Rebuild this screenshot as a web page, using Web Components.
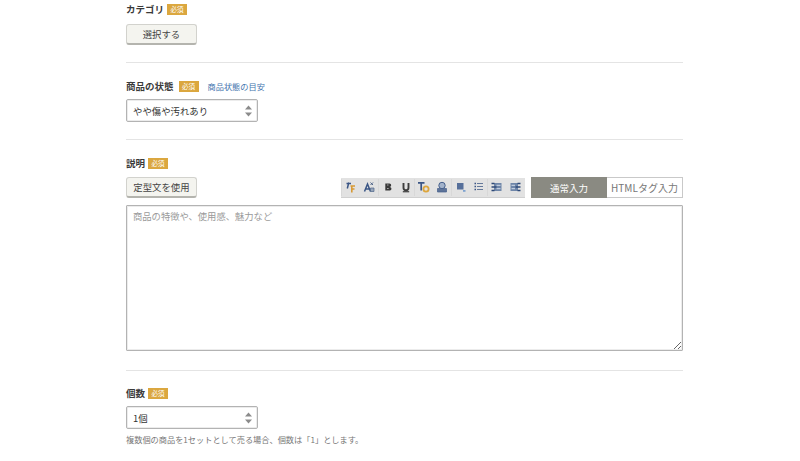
<!DOCTYPE html>
<html lang="ja">
<head>
<meta charset="utf-8">
<title>商品情報</title>
<style>
  html, body { margin: 0; background: #fff; height: 461px; overflow: hidden; }
  body { font-family: "Noto Sans CJK JP", "Liberation Sans", sans-serif; color: #333; }
</style>
</head>
<body>
<item-form>
  <form-field label="カテゴリ" gap="6" badge-gap="3">
    <plain-button width="71">選択する</plain-button>
  </form-field>
  <form-divider top="17" bottom="14"></form-divider>
  <form-field label="商品の状態" gap="4" badge-gap="5">
    <a slot="extra" style="color:#3f74ae;font-size:8.2px;margin-left:9px;text-decoration:none">商品状態の目安</a>
    <select-box>やや傷や汚れあり</select-box>
  </form-field>
  <form-divider top="17" bottom="14"></form-divider>
  <form-field label="説明" gap="5" badge-gap="3">
    <editor-box></editor-box>
  </form-field>
  <form-divider top="19" bottom="13"></form-divider>
  <form-field label="個数" gap="4" badge-gap="3">
    <select-box>1個</select-box>
    <p style="margin:4px 0 0;font-size:8.2px;line-height:12px;color:#777">複数個の商品を1セットとして売る場合、個数は「1」とします。</p>
  </form-field>
</item-form>

<script>
class ItemForm extends HTMLElement {
  constructor() {
    super();
    this.attachShadow({ mode: "open" });
    this.shadowRoot.innerHTML = `
      <style>
        :host { display: block; width: 557px; margin: 0 auto 0 126px; }
      </style>
      <slot></slot>
    `;
  }
}

class FormField extends HTMLElement {
  constructor() {
    super();
    this.attachShadow({ mode: "open" });
    const label = this.getAttribute("label");
    const gap = this.getAttribute("gap") || 4;
    const badgeGap = this.getAttribute("badge-gap") || 3;
    this.shadowRoot.innerHTML = `
      <style>
        :host { display: block; }
        #head {
          display: flex;
          align-items: center;
          height: 18px;
          margin-bottom: ${gap}px;
        }
        #label { font-size: 9.5px; font-weight: 700; color: #3a3a3a; }
        #badge {
          margin-left: ${badgeGap}px;
          width: 20px;
          height: 11px;
          background: #dba73f;
          color: #fff;
          font-size: 6.5px;
          line-height: 11px;
          text-align: center;
        }
      </style>
      <div id="head">
        <span id="label">${label}</span>
        <span id="badge">必須</span>
        <slot name="extra"></slot>
      </div>
      <slot></slot>
    `;
  }
}

class FormDivider extends HTMLElement {
  constructor() {
    super();
    this.attachShadow({ mode: "open" });
    const top = this.getAttribute("top") || 16;
    const bottom = this.getAttribute("bottom") || 14;
    this.shadowRoot.innerHTML = `
      <style>
        :host { display: block; height: 1px; background: #e4e4e4; margin: ${top}px 0 ${bottom}px; }
      </style>
    `;
  }
}

class PlainButton extends HTMLElement {
  constructor() {
    super();
    this.attachShadow({ mode: "open" });
    const width = this.getAttribute("width") || 71;
    this.shadowRoot.innerHTML = `
      <style>
        :host {
          display: flex;
          align-items: center;
          justify-content: center;
          box-sizing: border-box;
          width: ${width}px;
          height: 21px;
          background: #f4f4ef;
          border: 1px solid #d2d2cd;
          border-bottom: 2px solid #b4b4ae;
          border-radius: 3px;
          font-size: 9.4px;
          color: #444;
        }
      </style>
      <slot></slot>
    `;
  }
}

class SelectBox extends HTMLElement {
  constructor() {
    super();
    this.attachShadow({ mode: "open" });
    this.shadowRoot.innerHTML = `
      <style>
        :host {
          display: flex;
          align-items: center;
          box-sizing: border-box;
          width: 132px;
          height: 23px;
          padding: 0 5px 0 6px;
          border: 1px solid #b3b3b3;
          border-radius: 2px;
          box-shadow: inset 0 0 0 1px #ececec;
          background: #fff;
          font-size: 9.4px;
          color: #333;
        }
        #text { flex: 1; }
        svg { display: block; }
      </style>
      <span id="text"><slot></slot></span>
      <svg width="7" height="12" viewBox="0 0 7 12">
        <path d="M3.5 0.5 L7 4.5 H0 Z M0 7.5 H7 L3.5 11.5 Z" fill="#8b8b8b"/>
      </svg>
    `;
  }
}

class EditorToolbar extends HTMLElement {
  constructor() {
    super();
    this.attachShadow({ mode: "open" });
    this.shadowRoot.innerHTML = `
      <style>
        :host {
          display: flex;
          align-items: center;
          gap: .5px;
          box-sizing: border-box;
          width: 184px;
          height: 20px;
          padding-left: 1px;
          background: #e2e2e2;
          border-bottom: 1px solid #d0d0d0;
        }
        .group { display: flex; align-items: center; height: 17px; box-shadow: -1px 0 0 #d8d8d8; }
        .group:first-child { box-shadow: none; }
        svg { display: block; width: 18px; height: 14px; }
      </style>
      <div class="group">
        <svg viewBox="0 0 18 14"><path d="M4.5 3.5h4.5M6.8 2.5L5.3 8.5" stroke="#3a5585" stroke-width="1.5" fill="none"/><path d="M8.5 6h4.5M9.8 6v6.5M9.8 9h2.7" stroke="#d79a35" stroke-width="1.6" fill="none"/></svg>
        <svg viewBox="0 0 18 14"><path d="M4.5 11.5L7.5 4 10.5 11.5M5.7 9h3.6" stroke="#3a5585" stroke-width="1.5" fill="none"/><path d="M10.5 2.5l2.5 2.5M13 2.5l-2.5 2.5" stroke="#4f6589" stroke-width="1" fill="none"/><path d="M10.5 8h3.5v3.5h-3.5z" fill="#98a6ba" stroke="#4f6589" stroke-width=".7"/></svg>
      </div>
      <div class="group">
        <svg viewBox="0 0 18 14"><path d="M6.3 3.5h4.2a1.6 1.6 0 0 1 0 3.4 1.7 1.7 0 0 1 .3 3.6H6.3z" fill="#3a3a3a"/><path d="M8 5h1.5M8 8.5h1.7" stroke="#a8a8a8" stroke-width="1"/></svg>
        <svg viewBox="0 0 18 14"><path d="M6.5 3v4.8a2.5 2.5 0 0 0 5 0V3" fill="none" stroke="#3d3d3d" stroke-width="1.9"/><path d="M5.8 11.7h6.4" stroke="#4a4a4a" stroke-width="1.3"/></svg>
      </div>
      <div class="group">
        <svg viewBox="0 0 18 14"><path d="M3 2.8h6.5M6.2 2.8v7.7" stroke="#3a5585" stroke-width="1.7" fill="none"/><circle cx="11" cy="9" r="2.6" fill="none" stroke="#dda63d" stroke-width="1.8"/></svg>
        <svg viewBox="0 0 18 14"><circle cx="9" cy="5.5" r="3.2" fill="#a3b3cb" stroke="#46608c"/><path d="M4.5 8.5h9v3.5h-9z" fill="#5d7399" stroke="#46608c" stroke-width=".7"/></svg>
      </div>
      <div class="group">
        <svg viewBox="0 0 18 14"><path d="M5 3h6.5v6.5H5z" fill="#566f9a"/><path d="M11 10h2.5v1.8H11z" fill="#7fa3d0"/></svg>
        <svg viewBox="0 0 18 14"><path d="M4.5 3.5h1.5M4.5 6.5h1.5M4.5 9.5h1.5" stroke="#3a5585" stroke-width="1.5"/><path d="M7 3.5h6M7 6.5h6M7 9.5h6" stroke="#64789a" stroke-width="1.1"/></svg>
      </div>
      <div class="group">
        <svg viewBox="0 0 18 14"><path d="M6 3h7.5v8H6z" fill="#6f86a9"/><path d="M3.5 3.5h3M3.5 10.5h3M3.5 7h5" stroke="#2f4a78" stroke-width="1.5"/><path d="M8.5 5.3h4M8.5 8.7h4" stroke="#e0e7f1" stroke-width=".9"/></svg>
        <svg viewBox="0 0 18 14"><path d="M4.5 3h7.5v8H4.5z" fill="#6f86a9"/><path d="M11.5 3.5h3M11.5 10.5h3M9.5 7h5" stroke="#2f4a78" stroke-width="1.5"/><path d="M5.5 5.3h3.5M5.5 8.7h3.5" stroke="#e0e7f1" stroke-width=".9"/></svg>
      </div>
    `;
  }
}

class ModeToggle extends HTMLElement {
  constructor() {
    super();
    this.attachShadow({ mode: "open" });
    this.shadowRoot.innerHTML = `
      <style>
        :host {
          display: flex;
          box-sizing: border-box;
          width: 152px;
          height: 21px;
          font-size: 9.5px;
          background: #fff;
        }
        div { display: flex; align-items: center; justify-content: center; box-sizing: border-box; }
        #on { width: 76px; background: #8a8a82; color: #fff; }
        #off { flex: 1; color: #777; border: 1px solid #c9c9c9; border-left: 0; font-size: 10px; }
      </style>
      <div id="on">通常入力</div>
      <div id="off">HTMLタグ入力</div>
    `;
  }
}

class EditorBox extends HTMLElement {
  constructor() {
    super();
    this.attachShadow({ mode: "open" });
    this.shadowRoot.innerHTML = `
      <style>
        :host { display: block; }
        #bar { display: flex; align-items: center; height: 21px; margin-bottom: 7px; }
        #tools { display: flex; align-items: center; gap: 6px; margin-left: auto; }
        #area {
          display: block;
          box-sizing: border-box;
          width: 557px;
          height: 146px;
          margin: 0;
          padding: 2px 6px;
          border: 1px solid #b3b3b3;
          border-radius: 1px;
          box-shadow: inset 0 0 0 1px #ececec;
          outline: 0;
          font: 9.3px/16px "Noto Sans CJK JP", "Liberation Sans", sans-serif;
          color: #333;
        }
        #area::placeholder { color: #9a9a9a; opacity: 1; }
      </style>
      <div id="bar">
        <plain-button width="71">定型文を使用</plain-button>
        <div id="tools">
          <editor-toolbar></editor-toolbar>
          <mode-toggle></mode-toggle>
        </div>
      </div>
      <textarea id="area" placeholder="商品の特徴や、使用感、魅力など"></textarea>
    `;
  }
}

customElements.define("item-form", ItemForm);
customElements.define("form-field", FormField);
customElements.define("form-divider", FormDivider);
customElements.define("plain-button", PlainButton);
customElements.define("select-box", SelectBox);
customElements.define("editor-toolbar", EditorToolbar);
customElements.define("mode-toggle", ModeToggle);
customElements.define("editor-box", EditorBox);
</script>
</body>
</html>
